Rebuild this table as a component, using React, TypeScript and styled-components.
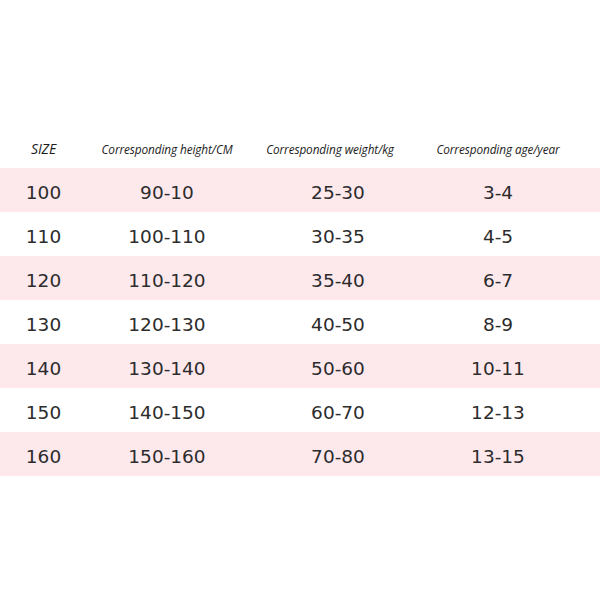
import styled, { createGlobalStyle } from "styled-components";

const GlobalStyle = createGlobalStyle`
  html, body {
    margin: 0;
    padding: 0;
    background: #ffffff;
  }
`;

const headers = [
  "SIZE",
  "Corresponding height/CM",
  "Corresponding weight/kg",
  "Corresponding age/year",
];

const rows = [
  ["100", "90-10", "25-30", "3-4"],
  ["110", "100-110", "30-35", "4-5"],
  ["120", "110-120", "35-40", "6-7"],
  ["130", "120-130", "40-50", "8-9"],
  ["140", "130-140", "50-60", "10-11"],
  ["150", "140-150", "60-70", "12-13"],
  ["160", "150-160", "70-80", "13-15"],
];

const App = () => {
  return (
    <>
      <GlobalStyle />
      <Page>
        <HeaderRow>
          {headers.map((each, index) => (
            <HeaderCell key={index} big={index === 0 ? 1 : 0}>
              {each}
            </HeaderCell>
          ))}
        </HeaderRow>
        {rows.map((row, index) => (
          <DataRow key={index} striped={index % 2 === 0 ? 1 : 0}>
            {row.map((each, i) => (
              <DataCell key={i}>{each}</DataCell>
            ))}
          </DataRow>
        ))}
      </Page>
    </>
  );
};

const Page = styled.div`
  display: flex;
  flex-direction: column;
  width: 600px;
  height: 600px;
  padding-top: 128px;
  box-sizing: border-box;
  background: #ffffff;
`;

const HeaderRow = styled.div`
  display: grid;
  grid-template-columns: 87px 160px 166px 170px 1fr;
  height: 40px;
  align-items: center;
`;

const HeaderCell = styled.div<{ big: number }>`
  text-align: center;
  font-family: "Open Sans", "DejaVu Sans", sans-serif;
  font-style: italic;
  font-size: ${({ big }) => (big ? "14px" : "11.8px")};
  color: #1c1c1c;
  letter-spacing: -0.1px;
  white-space: nowrap;
  padding-top: 1px;
`;

const DataRow = styled.div<{ striped: number }>`
  display: grid;
  grid-template-columns: 87px 160px 182px 138px 1fr;
  height: 44px;
  align-items: center;
  background: ${({ striped }) => (striped ? "#fde8ec" : "#ffffff")};
`;

const DataCell = styled.div`
  text-align: center;
  font-family: "DejaVu Sans", sans-serif;
  font-size: 18.5px;
  color: #2c2c2c;
  padding-top: 5px;
`;

export default App;
